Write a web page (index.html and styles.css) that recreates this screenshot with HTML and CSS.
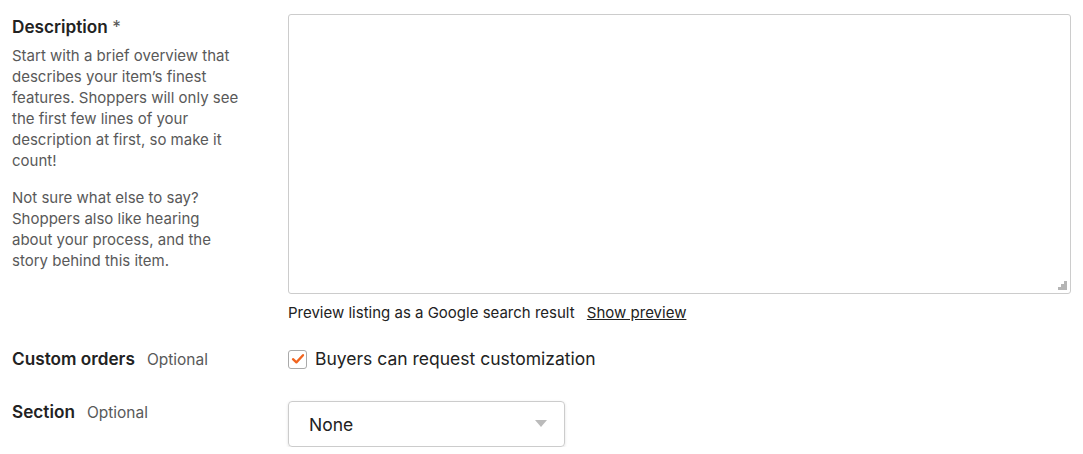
FILE: index.html
```html
<!DOCTYPE html>
<html>
<head>
<meta charset="utf-8">
<link rel="stylesheet" href="styles.css">
</head>
<body>
<div class="form">
  <div class="row row-desc">
    <div class="label-col">
      <h3 class="label">Description <span class="req">*</span></h3>
      <p class="help">Start with a brief overview that describes your item’s finest features. Shoppers will only see the first few lines of your description at first, so make it count!</p>
      <p class="help">Not sure what else to say? Shoppers also like hearing about your process, and the story behind this item.</p>
    </div>
    <div class="field-col">
      <div class="textarea">
        <svg class="grip" width="9" height="9" viewBox="0 0 9 9"><g fill="#b5b5b5"><rect x="6" y="0" width="3" height="3"/><rect x="3" y="3" width="3" height="3"/><rect x="6" y="3" width="3" height="3"/><rect x="0" y="6" width="3" height="3"/><rect x="3" y="6" width="3" height="3"/><rect x="6" y="6" width="3" height="3"/></g></svg>
      </div>
      <div class="preview">Preview listing as a Google search result <a class="link">Show preview</a></div>
    </div>
  </div>
  <div class="row row-custom">
    <div class="label-col inline">
      <h3 class="label">Custom orders</h3><span class="optional">Optional</span>
    </div>
    <div class="field-col">
      <label class="check">
        <span class="box"><svg width="14" height="12" viewBox="0 0 14 12"><path d="M2 6.2 L5.4 9.4 L12 2.2" fill="none" stroke="#f1641e" stroke-width="2.3" stroke-linecap="round" stroke-linejoin="round"/></svg></span>
        <span class="check-text">Buyers can request customization</span>
      </label>
    </div>
  </div>
  <div class="row row-section">
    <div class="label-col inline">
      <h3 class="label">Section</h3><span class="optional">Optional</span>
    </div>
    <div class="field-col">
      <div class="select"><span>None</span><span class="caret"></span></div>
    </div>
  </div>
</div>
</body>
</html>
```
FILE: styles.css
```css
* { box-sizing: border-box; }
html, body { margin: 0; padding: 0; background: #fff; }
body { font-family: Inter, "Noto Sans", sans-serif; color: #222; }
.form { padding: 14px 12px 0 12px; }
.row { display: grid; grid-template-columns: 276px 1fr; }
.label-col { padding-right: 46px; }
.label { margin: 0; font-size: 17.2px; line-height: 26px; font-weight: 600; color: #222; }
.req { color: #595959; font-weight: 400; }
.help { margin: 5px 0 16px 0; font-size: 15px; line-height: 21px; color: #595959; }
.help + .help { margin-top: 0; }
.textarea { position: relative; height: 280px; border: 1px solid #ccc; border-radius: 3px; }
.grip { position: absolute; right: 3px; bottom: 3px; }
.preview { margin-top: 8px; font-size: 15px; line-height: 21px; color: #222; }
.link { margin-left: 8px; text-decoration: underline; color: #222; }
.row-custom { margin-top: 23px; align-items: center; }
.inline { display: flex; align-items: baseline; gap: 12px; white-space: nowrap; }
.optional { font-size: 15.5px; color: #595959; }
.check { display: flex; align-items: center; gap: 8px; }
.box { width: 19px; height: 19px; border: 1px solid #aaa; border-radius: 3px; display: flex; align-items: center; justify-content: center; }
.check-text { font-size: 17.5px; line-height: 24px; }
.row-section { margin-top: 29px; }
.row-section .label { line-height: 22px; }
.select { width: 277px; height: 46px; border: 1px solid #ccc; border-radius: 4px; box-shadow: 0 1px 3px rgba(0,0,0,0.12); display: flex; align-items: center; justify-content: space-between; padding: 0 17px 0 20px; font-size: 17.5px; }
.caret { width: 0; height: 0; border-left: 6px solid transparent; border-right: 6px solid transparent; border-top: 7px solid #bbb; margin-top: -2px; }
```
